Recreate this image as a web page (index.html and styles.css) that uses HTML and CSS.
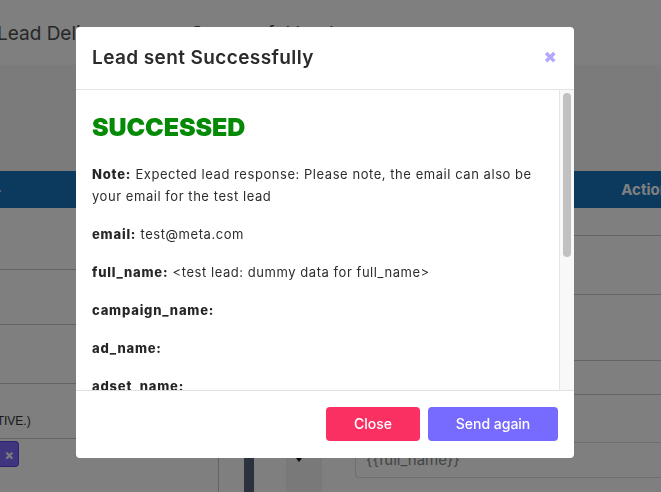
FILE: index.html
```html
<!DOCTYPE html>
<html lang="en">
<head>
<meta charset="utf-8">
<title>Lead sent Successfully</title>
<link rel="stylesheet" href="styles.css">
</head>
<body>
<div class="page">
  <header class="topbar">
    <span class="page-title">Lead Delivery</span>
    <span class="status-icon"></span>
    <span class="status-text">Successful lead</span>
  </header>
  <main class="content">
    <div class="thead">
      <span class="th-left">–</span>
      <span class="th-right">Action</span>
    </div>
    <div class="tbody">
      <div class="col-left">
        <div class="lrow lrow-1"></div>
        <div class="lrow lrow-2"></div>
        <div class="lrow lrow-3"></div>
        <div class="lrow lrow-4"><span class="note-text">(ACTIVE.)</span></div>
        <div class="lrow-5"><span class="tag-btn">×</span></div>
      </div>
      <div class="col-right">
        <div class="rrow rrow-1"></div>
        <div class="rrow rrow-2"></div>
        <div class="rrow rrow-3"></div>
        <div class="rrow rrow-4"></div>
        <div class="rrow-5">
          <span class="dark-bar"></span>
          <span class="shade-col"><span class="caret"></span></span>
          <span class="field">{{full_name}}</span>
        </div>
      </div>
    </div>
  </main>
</div>

<div class="overlay">
  <div class="modal">
    <div class="modal-header">
      <h1 class="modal-title">Lead sent Successfully</h1>
      <span class="modal-x">✖</span>
    </div>
    <div class="modal-body">
      <div class="body-content">
        <h2 class="status">SUCCESSED</h2>
        <p><b>Note:</b> Expected lead response: Please note, the email can also be your email for the test lead</p>
        <p><b>email:</b> test@meta.com</p>
        <p><b>full_name:</b> &lt;test lead: dummy data for full_name&gt;</p>
        <p><b>campaign_name:</b></p>
        <p><b>ad_name:</b></p>
        <p><b>adset_name:</b></p>
        <p><b>form_name:</b></p>
        <p><b>form_id:</b></p>
        <p><b>page_id:</b></p>
        <p><b>created_time:</b></p>
        <p><b>platform:</b></p>
        <p><b>lead_id:</b></p>
      </div>
      <div class="scrollbar"><div class="thumb"></div></div>
    </div>
    <div class="modal-footer">
      <button class="btn btn-close">Close</button>
      <button class="btn btn-send">Send again</button>
    </div>
  </div>
</div>
</body>
</html>
```
FILE: styles.css
```css
* { box-sizing: border-box; }
html, body { margin: 0; padding: 0; }
body {
  width: 661px;
  height: 492px;
  overflow: hidden;
  font-family: Inter, "Noto Sans", sans-serif;
  background: #f6f6f6;
}

/* background page */
.page { width: 661px; height: 492px; overflow: hidden; }
.topbar {
  height: 65px;
  background: #ffffff;
  display: flex;
  align-items: center;
  font-size: 19px;
  color: #4e4e4e;
  white-space: nowrap;
  padding-top: 2px;
}
.page-title { margin-left: -3px; width: 166px; }
.status-icon { width: 14px; height: 14px; border: 3px solid #4e4e4e; border-radius: 4px; margin-right: 14px; }

.content { padding-top: 106px; }
.thead {
  height: 37px;
  background: #1674bc;
  display: flex;
  align-items: center;
  justify-content: space-between;
  color: #ffffff;
  font-weight: 700;
  font-size: 15px;
  white-space: nowrap;
}
.th-left { margin-left: -7px; color: #ffffff; }
.th-right { margin-right: -8px; }

.tbody { display: grid; grid-template-columns: 219px 1fr; background: #ffffff; }
.col-left { border-right: 1px solid #c8c8c8; }
.lrow { border-bottom: 1px solid #c8c8c8; }
.lrow-1 { height: 62px; }
.lrow-2 { height: 55px; }
.lrow-3 { height: 59px; }
.lrow-4 { height: 55px; display: flex; align-items: flex-end; padding-bottom: 10px; }
.note-text { font-family: "Liberation Sans", Arial, sans-serif; font-size: 12px; color: #333; margin-left: -24px; }
.lrow-5 { height: 80px; padding-top: 2px; }
.tag-btn {
  display: flex; align-items: center; justify-content: flex-end;
  width: 19px; height: 26px;
  background: #7f6bff; border: 1px solid #5846d8; border-left: none;
  border-radius: 0 4px 4px 0;
  color: #ffffff; font-weight: 700; font-size: 14px; padding-right: 4px;
}

.rrow { border-bottom: 1px solid #c8c8c8; }
.rrow-1 { height: 28px; }
.rrow-2 { height: 59px; }
.rrow-3 { height: 66px; }
.rrow-4 { height: 34px; }
.rrow-5 { display: flex; height: 120px; }
.dark-bar { width: 10px; margin-left: 25px; background: #56657a; }
.shade-col { width: 36px; margin-left: 32px; background: #f2f2f2; position: relative; }
.caret {
  position: absolute; left: 10px; top: 63px;
  width: 0; height: 0;
  border-left: 3px solid transparent; border-right: 3px solid transparent;
  border-top: 4px solid #111;
}
.field {
  margin-left: 33px; margin-top: 47px;
  flex: 1; height: 36px;
  border: 1px solid #dcdcdc; border-right: none;
  border-radius: 4px 0 0 4px;
  padding: 7px 10px; font-size: 15px; color: #8a8a8a;
  background: #ffffff;
}

/* modal */
.overlay {
  position: fixed;
  inset: 0;
  background: rgba(0, 0, 0, 0.5);
  padding: 27px 0 0 76px;
}
.modal {
  width: 498px;
  height: 431px;
  background: #ffffff;
  border-radius: 4px;
  display: flex;
  flex-direction: column;
  overflow: hidden;
}
.modal-header {
  height: 63px;
  flex: none;
  display: flex;
  align-items: center;
  justify-content: space-between;
  padding: 0 17px 0 16px;
  border-bottom: 1px solid #e3e3e3;
}
.modal-title {
  margin: 0;
  font-size: 19px;
  font-weight: 600;
  color: #2b2b2b;
  letter-spacing: 0.4px;
  padding-bottom: 1px;
}
.modal-x {
  color: #b2a8ff;
  font-size: 16px;
  font-family: "DejaVu Sans", sans-serif;
  line-height: 1;
}
.modal-body {
  height: 300px;
  flex: none;
  display: flex;
}
.body-content {
  flex: 1;
  overflow: hidden;
  padding: 22px 16px 16px;
  font-size: 13px;
  line-height: 22px;
  color: #2d2d2d;
  letter-spacing: 0.55px;
}
.scrollbar {
  width: 15px;
  flex: none;
  background: #f8f8f8;
  border-left: 1px solid #e6e6e6;
  padding: 3px 3px 0 3px;
}
.thumb {
  width: 8px;
  height: 164px;
  background: #c1c1c1;
  border-radius: 4px;
}
.status {
  margin: 0 0 21px;
  font-size: 25px;
  line-height: 30px;
  font-weight: 900;
  color: #058a05;
  letter-spacing: -0.1px;
}
.body-content p { margin: 0 0 16px; }
.body-content b { font-weight: 800; color: #262626; letter-spacing: 0.8px; }
.modal-footer {
  height: 68px;
  flex: none;
  border-top: 1px solid #dee2e6;
  display: flex;
  align-items: center;
  justify-content: flex-end;
  gap: 8px;
  padding: 0 16px 2px 0;
}
.btn {
  height: 34px;
  border: none;
  border-radius: 4px;
  color: #ffffff;
  font-family: Inter, "Noto Sans", sans-serif;
  font-size: 14px;
  font-weight: 500;
}
.btn-close { width: 94px; background: #fa3063; }
.btn-send { width: 130px; background: #766aff; }
```
